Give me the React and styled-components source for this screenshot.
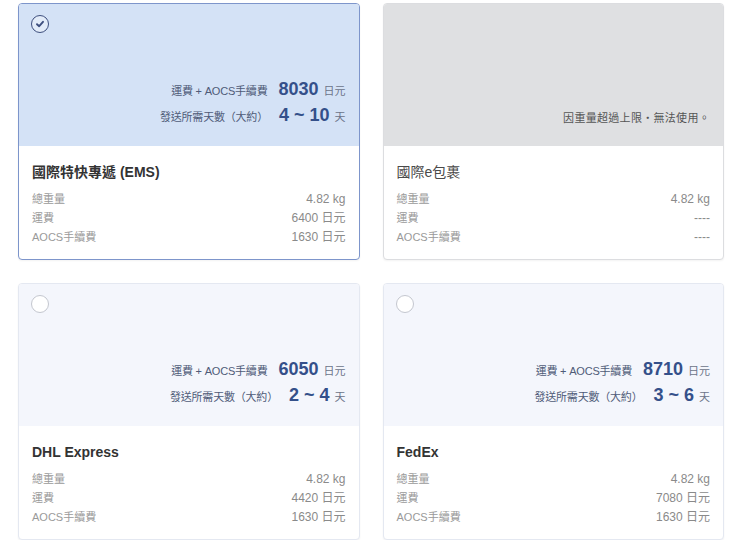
import styled, { createGlobalStyle } from "styled-components";

const GlobalStyle = createGlobalStyle`
  html, body {
    margin: 0;
    padding: 0;
    background: #ffffff;
  }
  body {
    font-family: "Liberation Sans", "Noto Sans CJK TC", Arial, sans-serif;
  }
`;

const Page = styled.div`
  padding: 3px 16px 0 18px;
  display: grid;
  grid-template-columns: 1fr 1fr;
  column-gap: 23px;
  row-gap: 23px;
`;

const Card = styled.div`
  display: flex;
  flex-direction: column;
  border: 1px solid ${(p) => (p.$selected ? "#7d95cb" : p.$disabled ? "#dcdde0" : "#e4e8f1")};
  border-radius: 4px;
  overflow: hidden;
  background: #fff;
  box-shadow: 0 1px 2px rgba(0, 0, 0, 0.05);
`;

const Top = styled.div`
  height: 142px;
  box-sizing: border-box;
  padding: 11px 13px ${(p) => (p.$disabled ? "15px" : "18px")} 12px;
  display: flex;
  flex-direction: column;
  background: ${(p) => (p.$selected ? "#d4e2f6" : p.$disabled ? "#dfe0e2" : "#f4f6fc")};
`;

const Radio = styled.div`
  width: 18px;
  height: 18px;
  box-sizing: border-box;
  border-radius: 50%;
  border: ${(p) => (p.$checked ? "1.5px solid #3e4f7e" : "1px solid #c4c7cf")};
  background: ${(p) => (p.$checked ? "rgba(255,255,255,0.35)" : "#fff")};
  display: flex;
  align-items: center;
  justify-content: center;
`;

const Summary = styled.div`
  margin-top: auto;
  display: flex;
  flex-direction: column;
  align-items: flex-end;
`;

const Line = styled.div`
  height: 26px;
  display: flex;
  align-items: baseline;
  justify-content: flex-end;
  line-height: 26px;
`;

const Label = styled.span`
  font-size: 11px;
  color: #4f5b78;
  letter-spacing: -0.2px;
`;

const Big = styled.span`
  font-size: 18px;
  font-weight: bold;
  color: #34508a;
  margin: 0 5px 0 11px;
`;

const Unit = styled.span`
  font-size: 11px;
  color: #6c7489;
`;

const Notice = styled.div`
  margin-top: auto;
  text-align: right;
  font-size: 11px;
  line-height: 26px;
  color: #555;
  letter-spacing: 0.3px;
`;

const Body = styled.div`
  padding: 16px 13px 12px 13px;
`;

const Title = styled.div`
  font-size: 14px;
  line-height: 20px;
  font-weight: ${(p) => (p.$disabled ? "normal" : "bold")};
  color: ${(p) => (p.$disabled ? "#4a4a4a" : "#333")};
  margin-bottom: 8px;
`;

const Row = styled.div`
  display: flex;
  justify-content: space-between;
  align-items: baseline;
  line-height: 19px;
`;

const RowLabel = styled.span`
  font-size: 11px;
  color: #9a9a9a;
`;

const RowValue = styled.span`
  font-size: 12px;
  color: #8a8a8a;
`;

const CheckMark = () => (
  <svg width="10" height="10" viewBox="0 0 10 10">
    <path d="M2 5.2 L4.2 7.2 L8 2.8" fill="none" stroke="#3e4f7e" strokeWidth="1.9" strokeLinecap="round" strokeLinejoin="round" />
  </svg>
);

const options = [
  {
    name: "國際特快專遞 (EMS)",
    total: "8030",
    days: "4 ~ 10",
    fee: "6400 日元",
    aocs: "1630 日元",
    selected: true,
  },
  {
    name: "國際e包裹",
    disabled: true,
    fee: "----",
    aocs: "----",
  },
  {
    name: "DHL Express",
    total: "6050",
    days: "2 ~ 4",
    fee: "4420 日元",
    aocs: "1630 日元",
  },
  {
    name: "FedEx",
    total: "8710",
    days: "3 ~ 6",
    fee: "7080 日元",
    aocs: "1630 日元",
  },
];

export default function App() {
  return (
    <>
      <GlobalStyle />
      <Page>
        {options.map((o) => (
          <Card key={o.name} $selected={o.selected} $disabled={o.disabled}>
            <Top $selected={o.selected} $disabled={o.disabled}>
              {o.disabled ? (
                <Notice>因重量超過上限・無法使用。</Notice>
              ) : (
                <>
                  <Radio $checked={o.selected}>{o.selected && <CheckMark />}</Radio>
                  <Summary>
                    <Line>
                      <Label>運費 + AOCS手續費</Label>
                      <Big>{o.total}</Big>
                      <Unit>日元</Unit>
                    </Line>
                    <Line>
                      <Label>發送所需天數（大約）</Label>
                      <Big>{o.days}</Big>
                      <Unit>天</Unit>
                    </Line>
                  </Summary>
                </>
              )}
            </Top>
            <Body>
              <Title $disabled={o.disabled}>{o.name}</Title>
              <Row>
                <RowLabel>總重量</RowLabel>
                <RowValue>4.82 kg</RowValue>
              </Row>
              <Row>
                <RowLabel>運費</RowLabel>
                <RowValue>{o.fee}</RowValue>
              </Row>
              <Row>
                <RowLabel>AOCS手續費</RowLabel>
                <RowValue>{o.aocs}</RowValue>
              </Row>
            </Body>
          </Card>
        ))}
      </Page>
    </>
  );
}
